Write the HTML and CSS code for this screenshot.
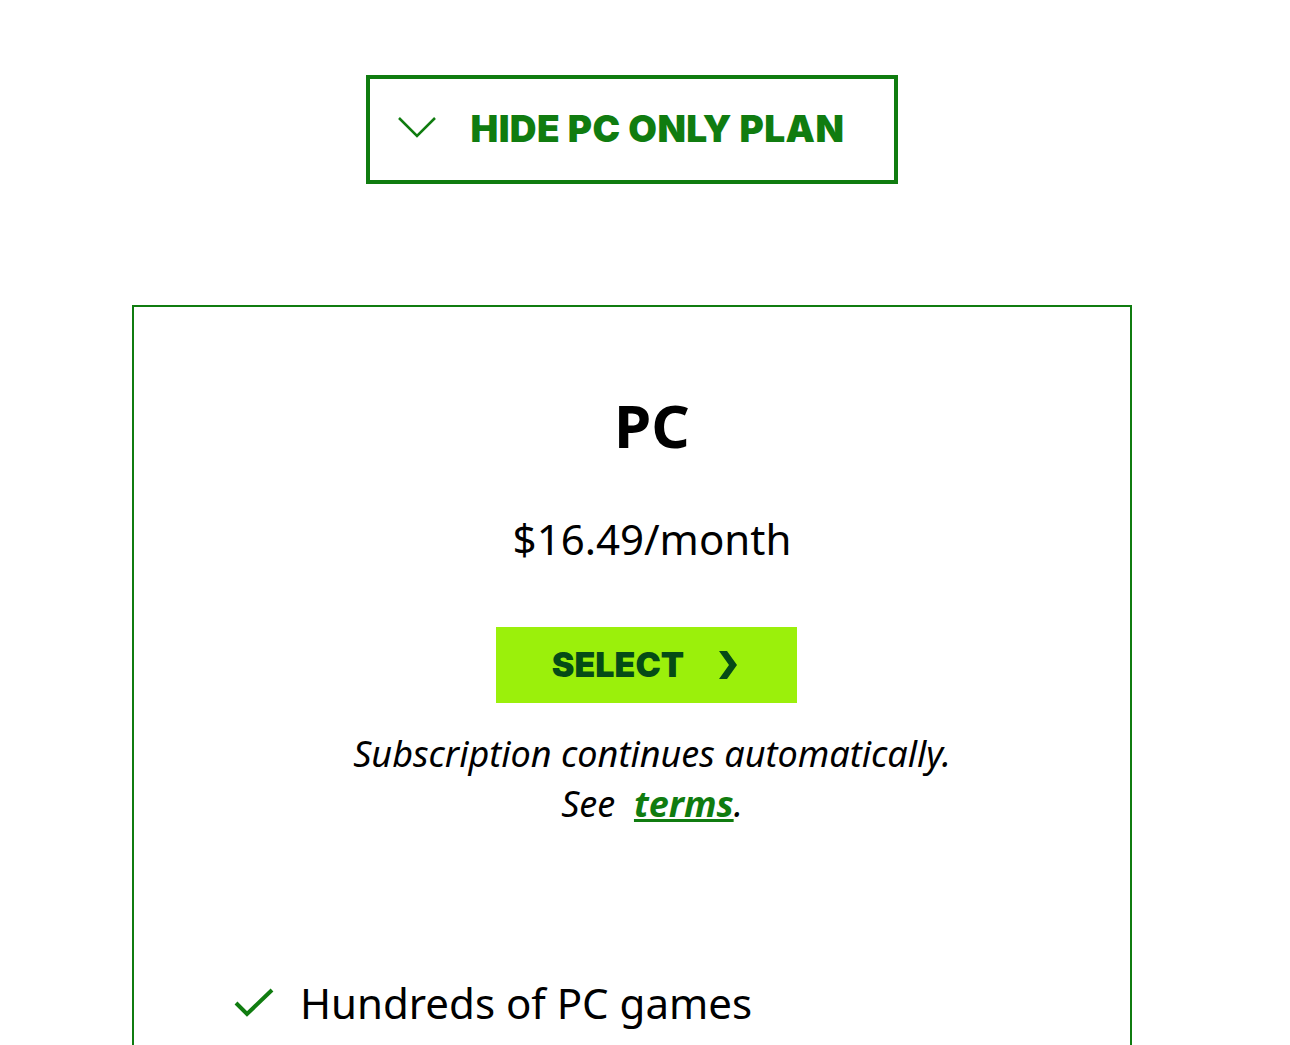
FILE: index.html
```html
<!DOCTYPE html>
<html lang="en">
<head>
<meta charset="utf-8">
<title>PC plan</title>
<link rel="stylesheet" href="styles.css">
</head>
<body>
<main class="page">
  <button class="toggle" type="button">
    <svg class="toggle-icon" width="40" height="24" viewBox="0 0 40 24" aria-hidden="true">
      <path d="M2 2 L20 20 L38 2" fill="none" stroke="#107c10" stroke-width="2.5"/>
    </svg>
    <span class="toggle-label">HIDE PC ONLY PLAN</span>
  </button>

  <section class="card">
    <div class="card-body">
      <h2 class="plan-title">PC</h2>
      <p class="plan-price">$16.49/month</p>
      <a class="select-btn" href="#">
        <span class="select-label">SELECT</span>
        <svg class="select-icon" width="20" height="28" viewBox="0 0 20 28" aria-hidden="true">
          <path d="M1 0 L9 0 L19 14 L9 28 L1 28 L11 14 Z" fill="#054b16"/>
        </svg>
      </a>
      <p class="plan-note"><span class="note-line">Subscription continues automatically.</span><span class="note-line">See&nbsp; <a class="terms" href="#">terms</a>.</span></p>
    </div>
    <ul class="features">
      <li class="feature">
        <svg class="check" width="40" height="30" viewBox="0 0 40 30" aria-hidden="true">
          <path d="M2 15 L13 26 L38 2" fill="none" stroke="#107c10" stroke-width="4"/>
        </svg>
        <span>Hundreds of PC games</span>
      </li>
    </ul>
  </section>
</main>
</body>
</html>
```

FILE: styles.css
```css
html, body {
  margin: 0;
  padding: 0;
  background: #ffffff;
}

body {
  font-family: "Noto Sans", "Open Sans", sans-serif;
  color: #000;
  overflow: hidden;
  height: 1045px;
}

.page {
  width: 1000px;
  margin-left: 132px;
  padding-top: 75px;
  display: flex;
  flex-direction: column;
}

.toggle {
  align-self: center;
  width: 532px;
  height: 109px;
  box-sizing: border-box;
  border: 4px solid #107c10;
  background: #fff;
  display: flex;
  align-items: center;
  padding: 0 0 0 27px;
  gap: 34px;
  cursor: pointer;
  font: inherit;
  margin-left: -1px;
}

.toggle-icon {
  display: block;
  margin-top: -4px;
}

.toggle-label {
  font-family: "Inter", "Noto Sans", sans-serif;
  font-weight: 900;
  font-size: 37px;
  color: #107c10;
  letter-spacing: 0.4px;
  line-height: 1;
  margin-top: -2px;
}

.card {
  margin-top: 121px;
  border: 2px solid #107c10;
  border-bottom: none;
  height: 800px;
  box-sizing: border-box;
}

.card-body {
  padding: 78px 0 0 40px;
  display: flex;
  flex-direction: column;
  align-items: center;
  text-align: center;
}

.plan-title {
  margin: 0;
  font-size: 60px;
  font-weight: 700;
  line-height: 80px;
}

.plan-price {
  margin: 44px 0 0;
  font-size: 42px;
  line-height: 60px;
}

.select-btn {
  margin: 58px 12px 0 0;
  width: 301px;
  height: 76px;
  background: #9bf00b;
  display: flex;
  align-items: center;
  justify-content: center;
  gap: 34px;
  text-decoration: none;
  padding-right: 2px;
  box-sizing: border-box;
}

.select-label {
  font-family: "Inter", "Noto Sans", sans-serif;
  font-weight: 900;
  font-size: 34px;
  color: #054b16;
  line-height: 1;
}

.select-icon {
  display: block;
}

.plan-note {
  margin: 26px 0 0;
  font-style: italic;
  font-size: 36px;
  line-height: 50px;
  display: flex;
  flex-direction: column;
  align-items: center;
}

.note-line {
  display: block;
}

.terms {
  color: #107c10;
  font-weight: 700;
  text-decoration: underline;
  text-decoration-thickness: 3px;
}

.features {
  list-style: none;
  margin: 144px 0 0;
  padding: 0 0 0 100px;
}

.feature {
  display: flex;
  align-items: center;
  gap: 26px;
  font-size: 42px;
  line-height: 60px;
}

.check {
  display: block;
}
```
